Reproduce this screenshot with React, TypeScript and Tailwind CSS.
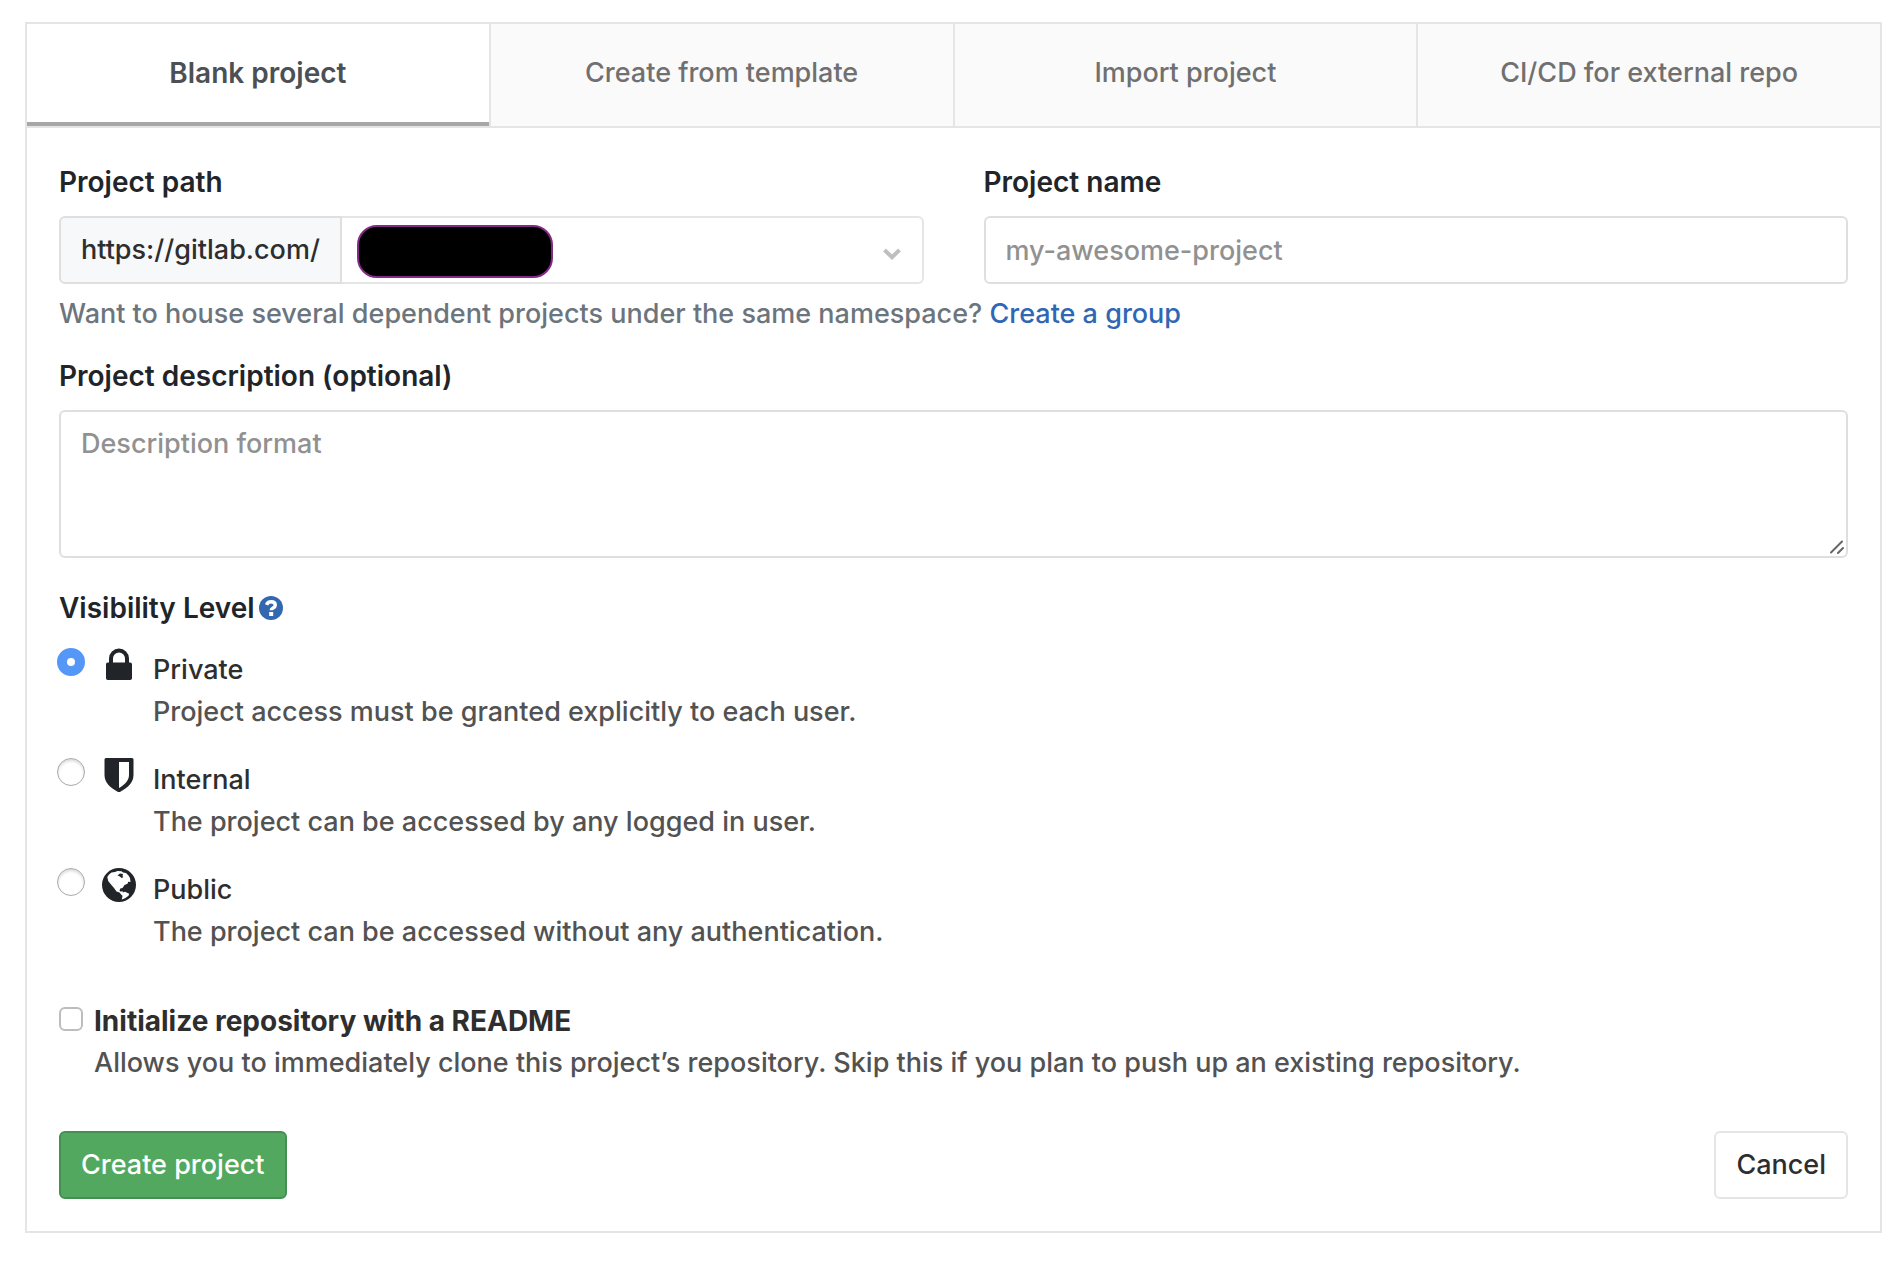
import type { ReactNode } from 'react';

const tabs = ['Blank project', 'Create from template', 'Import project', 'CI/CD for external repo'];

function LockIcon() {
  return (
    <svg viewBox="0 0 34 34" className="size-[34px]" fill="currentColor" aria-hidden="true">
      <path
        fillRule="evenodd"
        d="M7 14.500V10.500a10 10 0 0 1 20 0V14.500h1.200A1.800 1.800 0 0 1 30 16.300V30.200A1.800 1.800 0 0 1 28.200 32H5.800A1.800 1.800 0 0 1 4 30.200V16.300A1.800 1.800 0 0 1 5.800 14.500Z M11 14.500h12V10.500a6 6 0 0 0-12 0Z"
      />
    </svg>
  );
}

function ShieldIcon() {
  return (
    <svg viewBox="0 0 34 34" className="size-[34px]" fill="currentColor" aria-hidden="true">
      <path
        fillRule="evenodd"
        d="M4 0h26a1.500 1.500 0 0 1 1.500 1.500V17c0 8-6 13-14.500 17.500C8.500 30 2.500 25 2.500 17V1.500A1.500 1.500 0 0 1 4 0Z M17 4V30c6-3.500 10-7.500 10-13V4Z"
      />
    </svg>
  );
}

function EarthIcon() {
  return (
    <svg viewBox="0 0 34 34" className="size-[34px]" aria-hidden="true">
      <circle cx="17" cy="17" r="17" fill="currentColor" />
      <path
        fill="#fff"
        d="M7 6.500 9.500 4.500 13 4l2.500-1 4 .2 1.500 1.300 3 .5 2.500 2.500 1.500 2.500.5 4-2.300-.3-.7 2-3 1.300-2 3-2.200.5-.8 2 1.200 1.200 1.600-.7.700 1.800.3 2 1.700.7-1 1-2.500-1.500-2-2.500-3-1-2.500-3.500L9 16.500 6.200 13l-.9-4Z"
      />
      <path fill="currentColor" d="M15.500 7.500 18 5.500l3 .5-.5 2 .8 1.200L19.500 10l-1.500-1.500Z" />
      <path fill="#fff" d="M20.500 24.500l2.500-.7 4.200 2-.7 2-3.500 2.500-3.300 1.200.8-3.500Z" />
    </svg>
  );
}

function HelpIcon() {
  return (
    <svg viewBox="0 0 24 24" className="size-6" aria-hidden="true">
      <circle cx="12" cy="12" r="12" fill="#3367b0" />
      <path d="M7.600 8.800C8.400 6.600 9.800 5.800 12 5.800c2.600 0 4.300 1.400 4.300 3.400 0 2.900-4.100 2.600-4.100 5.100" fill="none" stroke="#fff" strokeWidth="3.400" />
      <path d="M10.200 16h4v4h-4z" fill="#fff" />
    </svg>
  );
}

const levels: { id: string; title: string; text: string; icon: ReactNode }[] = [
  { id: 'private', title: 'Private', text: 'Project access must be granted explicitly to each user.', icon: <LockIcon /> },
  { id: 'internal', title: 'Internal', text: 'The project can be accessed by any logged in user.', icon: <ShieldIcon /> },
  { id: 'public', title: 'Public', text: 'The project can be accessed without any authentication.', icon: <EarthIcon /> },
];

export default function App() {
  return (
    <main className="bg-white pt-[22px] pr-5 pb-10 pl-[25px] font-['Inter',sans-serif] text-[27px] leading-[42px] font-[450] text-[#2e2e2e]">
      <div className="border-2 border-[#e5e5e5]">
        <div role="tablist" className="flex border-b-2 border-[#e5e5e5]">
          {tabs.map((tab, i) => (
            <button
              key={tab}
              type="button"
              role="tab"
              aria-selected={i === 0}
              className="group h-[102px] flex-1 border-r-2 border-[#e5e5e5] bg-[#fafafa] text-[#707070] last:border-r-0 aria-selected:bg-white aria-selected:text-[28px] aria-selected:font-semibold aria-selected:text-[#4c4f54]"
            >
              <span className="flex h-full items-center justify-center border-b-4 border-transparent group-aria-selected:border-[#a7a7a7]">
                {tab}
              </span>
            </button>
          ))}
        </div>

        <form className="px-8 pt-[33px] pb-8" onSubmit={(e) => e.preventDefault()}>
          <div className="grid grid-cols-2 gap-[60px]">
            <div>
              <label htmlFor="namespace" className="mb-[13px] block text-[28px] font-semibold text-[#212529]">
                Project path
              </label>
              <div className="flex h-[68px]">
                <span className="flex items-center rounded-l-md border-2 border-[#dfdfdf] bg-[#f7f8fa] px-5">https://gitlab.com/</span>
                <div className="relative flex-1">
                  <select
                    id="namespace"
                    className="size-full appearance-none rounded-r-md border-2 border-l-0 border-[#e5e5e5] bg-white"
                  >
                    <option value=""></option>
                  </select>
                  <span className="pointer-events-none absolute top-[9px] left-[15px] h-[53px] w-[196px] rounded-[20px] border-2 border-[#842a86] bg-black" />
                  <svg viewBox="0 0 20 12" className="pointer-events-none absolute top-8 right-[22px] h-3 w-5" aria-hidden="true">
                    <path d="M2.500 2 10 9.200 17.500 2" fill="none" stroke="#bfbfbf" strokeWidth="4" />
                  </svg>
                </div>
              </div>
            </div>
            <div>
              <label htmlFor="name" className="mb-[13px] block text-[28px] font-semibold text-[#212529]">
                Project name
              </label>
              <input
                id="name"
                type="text"
                placeholder="my-awesome-project"
                className="h-[68px] w-full rounded-md border-2 border-[#dfdfdf] px-5 placeholder:text-[#919191]"
              />
            </div>
          </div>

          <p className="mt-[9px] text-[#6c757d]">
            Want to house several dependent projects under the same namespace?{' '}
            <a href="#group" className="text-[#3067b5]">
              Create a group
            </a>
          </p>

          <label htmlFor="description" className="mt-5 mb-[13px] block text-[28px] font-semibold text-[#212529]">
            Project description (optional)
          </label>
          <div className="relative">
            <textarea
              id="description"
              placeholder="Description format"
              className="block h-[148px] w-full resize-none rounded-md border-2 border-[#dfdfdf] px-5 py-[11px] placeholder:text-[#919191]"
            />
            <svg viewBox="0 0 14 14" className="pointer-events-none absolute right-1 bottom-1 size-3.5" aria-hidden="true">
              <path d="M1 12.500 12 1.500M8 13l5-5" stroke="#666" strokeWidth="2" strokeLinecap="round" />
            </svg>
          </div>

          <fieldset className="mt-[29px]">
            <legend className="flex items-center gap-1 text-[28px] font-semibold text-[#212529]">
              Visibility Level
              <a href="#help" aria-label="Help">
                <HelpIcon />
              </a>
            </legend>
            <div className="mt-[19px] flex flex-col gap-[25px]">
              {levels.map((level, i) => (
                <label key={level.id} htmlFor={level.id} className="flex items-start">
                  <input
                    id={level.id}
                    type="radio"
                    name="visibility"
                    defaultChecked={i === 0}
                    className="-ml-0.5 size-7 shrink-0 appearance-none rounded-full border border-[#a9a9a9] bg-white shadow-[inset_0_2px_3px_#d9d9d9] checked:border-[10px] checked:border-[#5597f7] checked:shadow-none"
                  />
                  <span className="ml-[17px] text-[#212529]">{level.icon}</span>
                  <span className="ml-[17px] pt-px">
                    <span className="block">{level.title}</span>
                    <span className="block text-[#525252]">{level.text}</span>
                  </span>
                </label>
              ))}
            </div>
          </fieldset>

          <div className="mt-[47px] flex items-start gap-[11px]">
            <input
              id="readme"
              type="checkbox"
              className="mt-[7px] size-6 shrink-0 appearance-none rounded-md border-2 border-[#bdbdbd] bg-white"
            />
            <label htmlFor="readme">
              <span className="block text-[28px] font-bold">Initialize repository with a README</span>
              <span className="block text-[#525252]">
                Allows you to immediately clone this project’s repository. Skip this if you plan to push up an existing repository.
              </span>
            </label>
          </div>

          <div className="mt-[47px] flex justify-between">
            <button type="submit" className="h-[68px] rounded-md border-2 border-[#468f52] bg-[#52a85e] px-5 text-white">
              Create project
            </button>
            <button type="button" className="h-[68px] rounded-md border-2 border-[#e5e5e5] bg-white px-5">
              Cancel
            </button>
          </div>
        </form>
      </div>
    </main>
  );
}
